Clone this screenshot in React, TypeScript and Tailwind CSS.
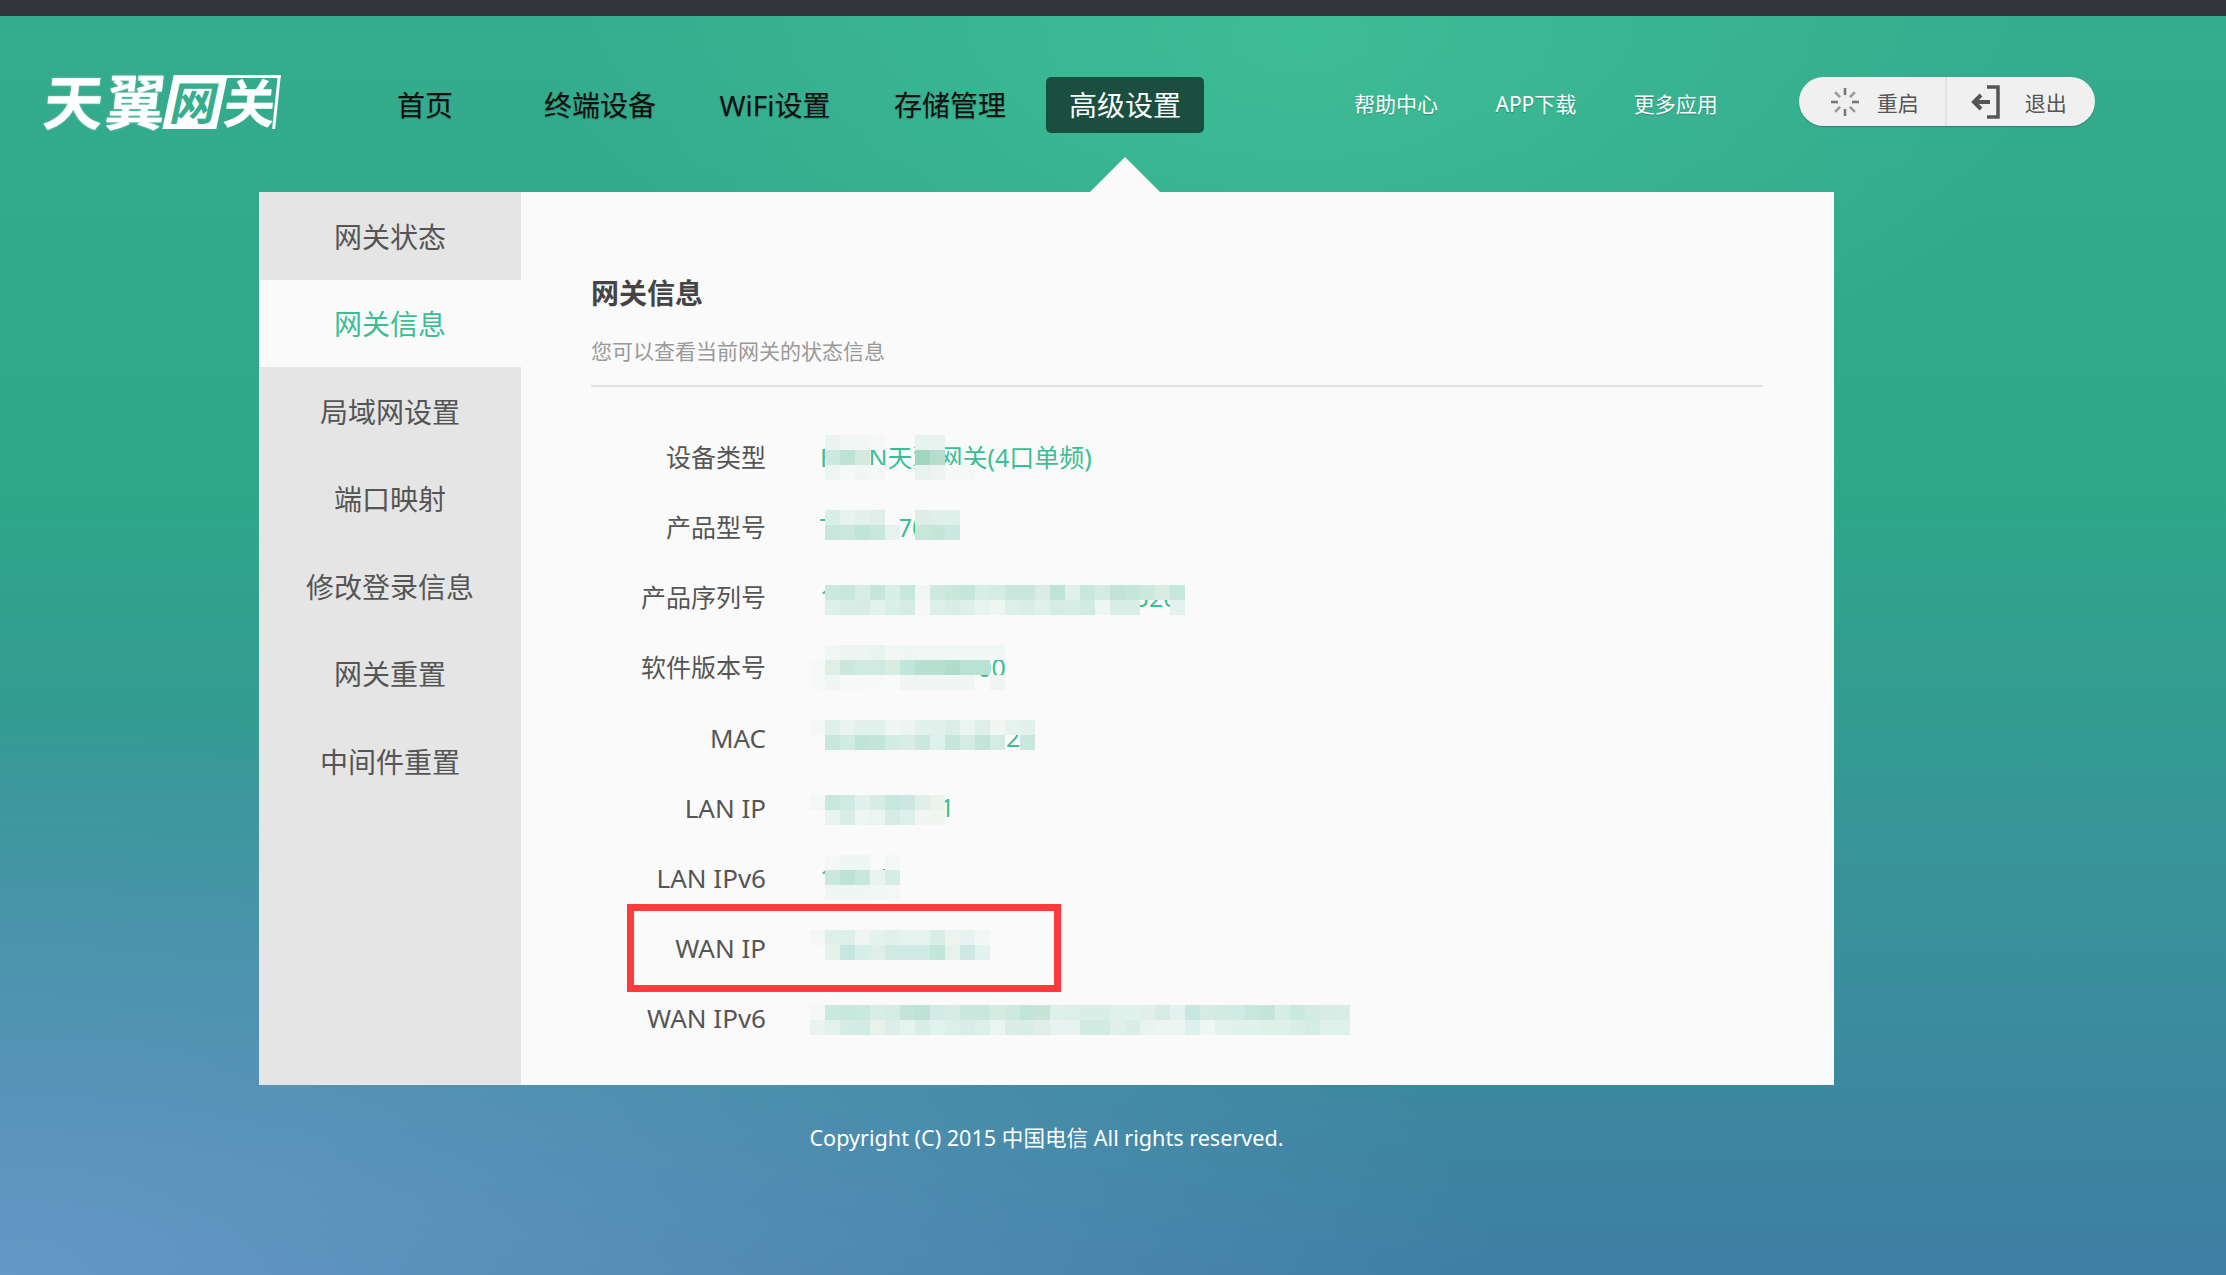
import React from "react";

const navItems = ["首页", "终端设备", "WiFi设置", "存储管理", "高级设置"];
const topLinks = ["帮助中心", "APP下载", "更多应用"];
const sideItems = ["网关状态", "网关信息", "局域网设置", "端口映射", "修改登录信息", "网关重置", "中间件重置"];

// each tile is 15x15, "" leaves the text below visible
const rows: { label: string; value: string; top: number; tiles: string[][] }[] = [
  {
    label: "设备类型",
    value: "EPON天翼网关(4口单频)",
    top: 12,
    tiles: [
      ["", "e9f4f1", "f1f7f5", "f2f7f5", "f4f8f7", "", "", "e6f3ef", "e8f3ef"],
      ["", "cfe8df", "bde3d6", "d5e9df", "", "", "", "a0d6c2", "b5ddce"],
      ["", "eef6f4", "f5f9f8", "eff6f4", "f3f8f7", "", "", "e8f3ef", "ebf4f1", "f5f8f7", "f5f8f7"],
    ],
  },
  {
    label: "产品型号",
    value: "T0000.700",
    top: 17,
    tiles: [
      ["", "d9eee8", "e6f3ef", "e2f1ec", "deefe9", "fafafa", "", "ddeee8", "dff0ea", "dff0ea"],
      ["", "c7e7dd", "cbe8de", "bfe5d9", "c9e6da", "e4f3ef", "", "c8e6da", "c6e5d9", "cbe9e2"],
    ],
  },
  {
    label: "产品序列号",
    value: "1000000000000000000000320",
    top: 22,
    tiles: [
      ["", "cde8de", "c9e7dc", "d8ede6", "c6e6da", "d8eee9", "c8e7dc", "f3f7f4", "cfe9e0", "c9e8dc", "c5e6da", "d7eee7", "d4ece4", "c9e7dc", "c9e7dc", "d9ede5", "bde4d6", "e0f1ed", "c9e7dc", "d3ebe2", "c2e4d6", "c5e6da", "cde9de", "d8ecdf", "c5e7dc"],
      ["", "def0ea", "d8ede6", "d6ece4", "e2f2ec", "d9efe9", "d4ece4", "f5f8f5", "dcefe8", "d8ede5", "dff0ea", "e8f4f0", "eff6f2", "dcefe9", "d9eee7", "e0f1ea", "d4ece4", "d7eee5", "d0ebe3", "eff6f4", "d9eee6", "d9eee6", "", "", "e3f2ee"],
    ],
  },
  {
    label: "软件版本号",
    value: "1000000000000",
    top: 12,
    tiles: [
      ["", "f1f7f5", "ecf5f2", "ecf5f2", "e9f3f0", "f2f7f5", "eff6f4", "f1f7f5", "f1f7f5", "f1f7f5", "f1f7f5", "f1f7f5", "f1f7f5"],
      ["f5f9f8", "deefe4", "c9e7db", "d0ebe3", "cfeae1", "d8ecdf", "c3e6dc", "b7e0d1", "b7e0d1", "aeddcb", "b9e2d5", "b9e2d5", ""],
      ["f5f9f8", "eff6f4", "f6f9f8", "f6f9f8", "f8faf9", "f9fafa", "f0f6f4", "f0f6f4", "f0f6f4", "f0f6f4", "f0f6f4", "", "eef5f3"],
    ],
  },
  {
    label: "MAC",
    value: "00000000000002",
    top: 17,
    tiles: [
      ["f3f8f6", "dfefea", "e9f3ef", "e2f1ec", "e2f1ec", "eff6f3", "edf5f2", "e3f1ed", "e3f1ed", "dceee8", "eaf4f0", "dcefe8", "f1f6f3", "e6f2ed", "e3f1ed"],
      ["fafafa", "c7e7dd", "d0ebe3", "bfe5d9", "c3e6da", "d2ece5", "daede5", "cae8de", "dff1ed", "c5e7db", "d4ece4", "c3e4d9", "d4ece4", "", "c8e8df"],
    ],
  },
  {
    label: "LAN IP",
    value: "192.168.1.1",
    top: 22,
    tiles: [
      ["f3f8f6", "c5e7dc", "cfeae3", "e2f1ee", "d7ede3", "c8e7dc", "cde6e2", "dff0ea", "ecf3ed"],
      ["fafafa", "e8f4f1", "d7ede6", "eef6f3", "eaf4f1", "d5ece4", "ddf0eb", "eff6f3", "f0f5f0"],
    ],
  },
  {
    label: "LAN IPv6",
    value: "1:11:1",
    top: 12,
    tiles: [
      ["", "f5f8f7", "f0f6f4", "f0f6f4", "", "f3f7f6"],
      ["", "c9e8de", "bde3d5", "c8e7dc", "e9f3ef", "d5ede6"],
      ["", "eff6f4", "eff6f4", "f0f6f4", "f1f7f5", "f3f7f6"],
    ],
  },
  {
    label: "WAN IP",
    value: "",
    top: 17,
    tiles: [
      ["f3f8f6", "dfefe9", "dcefe9", "eef5f3", "e4f2ee", "e2f0ec", "e6f2ee", "e6f2ee", "daeee8", "edf4ef", "e7f3f0", "f2f7f5"],
      ["", "e4f2ea", "c5e7df", "d8eee8", "dfefe8", "cfe9e3", "d0ebe3", "d0ebe3", "c2e6da", "e8f2ec", "cde9e1", "e2f2ee"],
    ],
  },
  {
    label: "WAN IPv6",
    value: "",
    top: 22,
    tiles: [
      ["f3f7f6", "c9e8df", "c5e7dc", "cbe8e0", "d9ede7", "d5ece6", "c3e4d9", "bfe2d6", "d2ebe7", "d6ede6", "c9e7dc", "c8e7dd", "d3ebe0", "cde9e0", "c3e5d9", "c7e4d7", "ddf0ec", "dcefe9", "d9eee7", "d9eee7", "e0f1ec", "e1f1ed", "e0f0e8", "d7ece4", "e3f2ef", "c8e8df", "d4ece4", "d2ebe2", "cdeae3", "c5e7dc", "c3e5da", "d6ece6", "cbe9df", "d3ebe3", "d6ece4", "d8ede7"],
      ["e9f4ef", "e2f2ed", "d4ece5", "d2ebe4", "e6f2ea", "dceee9", "e5f3ef", "daeee9", "e2f3ee", "dcf0ea", "d7eee8", "dcefe9", "eaf5f2", "daede7", "d8ede7", "dfeee6", "e6f3f0", "e6f3f0", "d2ebe2", "d2ebe2", "dff0ea", "d9eee9", "e9f4f0", "edf5f3", "edf5f3", "dcf0ec", "eff6f4", "e4f2ee", "e1f1ec", "e1f1ec", "dff0e9", "dff0e9", "d9eee7", "d4ece6", "e0f1ec", "e0f1ec"],
    ],
  },
];

function Mosaic({ top, tiles }: { top: number; tiles: string[][] }) {
  return (
    <div className="absolute left-[219px] flex flex-col" style={{ top }}>
      {tiles.map((line, i) => (
        <div key={i} className="flex">
          {line.map((c, j) => (
            <span key={j} className="w-[15px] h-[15px]" style={{ backgroundColor: c ? `#${c}` : "transparent" }} />
          ))}
        </div>
      ))}
    </div>
  );
}

function Logo() {
  return (
    <div className="w-[302px] h-[56px] flex items-center pb-[6px] select-none">
      <span className="text-[60px] leading-none font-bold text-white -skew-x-6 tracking-[2px] [text-shadow:0_0_2px_rgba(255,255,255,.5)]">天翼</span>
      <span className="w-[54px] h-[54px] bg-white text-[#37ad8f] text-[46px] leading-[54px] text-center font-bold -skew-x-12">网</span>
      <span className="w-[54px] h-[54px] ml-[2px] border-t-[3px] border-r-[3px] border-white text-white text-[52px] leading-[50px] text-center font-bold -skew-x-6">关</span>
    </div>
  );
}

function RestartIcon() {
  const rays = [0, 45, 90, 135, 180, 225, 270, 315];
  return (
    <svg width="32" height="32" viewBox="0 0 32 32" className="shrink-0">
      {rays.map((r) => (
        <line key={r} x1="16" y1="2" x2="16" y2="9" stroke={r % 90 === 0 ? "#777" : "#999"} strokeWidth="2.6" transform={`rotate(${r} 16 16)`} />
      ))}
    </svg>
  );
}

function ExitIcon() {
  return (
    <svg width="30" height="34" viewBox="0 0 30 34" fill="none" stroke="#555" className="shrink-0">
      <path d="M16 2h11v30H16" strokeWidth="3.5" />
      <path d="M19 17H4M10 10l-7 7 7 7" strokeWidth="4" />
    </svg>
  );
}

export default function App() {
  return (
    <div className="min-h-screen font-['Noto_Sans','Noto_Sans_CJK_SC',sans-serif] bg-[radial-gradient(ellipse_750px_420px_at_1300px_40px,rgba(66,200,155,.6),transparent),radial-gradient(ellipse_1500px_560px_at_0px_1275px,rgba(104,155,200,.92),transparent),linear-gradient(180deg,#36ac8e_0%,#2fa68a_40%,#3a8f9c_75%,#3f7ea4_100%)]">
      <div className="h-[16px] bg-[#35363b]" />

      {/* Header */}
      <header className="h-[176px] flex items-start pt-[61px] pl-[44px]">
        <Logo />
        <nav className="flex gap-[17px]">
          {navItems.map((item, i) => (
            <div
              key={item}
              className={
                i === 4
                  ? "relative w-[158px] h-[56px] rounded-[5px] bg-[#1a4f3f] text-white text-[28px] flex items-center justify-center"
                  : "w-[158px] h-[56px] text-[#111] text-[28px] flex items-center justify-center [text-shadow:0_1px_1px_rgba(0,0,0,.3)]"
              }
            >
              {item}
              {i === 4 && (
                <span className="absolute left-1/2 top-[80px] -translate-x-1/2 w-0 h-0 border-x-[35px] border-x-transparent border-b-[35px] border-b-[#fafafa]" />
              )}
            </div>
          ))}
        </nav>
        <div className="flex gap-[57.5px] ml-[150px] h-[56px] items-center">
          {topLinks.map((l) => (
            <span key={l} className="text-[21px] text-white [text-shadow:0_1px_1px_rgba(0,0,0,.25)]">{l}</span>
          ))}
        </div>
        <div className="flex ml-[81px] w-[296px] h-[49px] rounded-full bg-[#f0f0f0] shadow-[0_1px_1px_rgba(0,0,0,.25)] text-[21px] text-[#555]">
          <div className="w-[148px] flex items-center pl-[30px] gap-[16px] border-r-2 border-[#e2e2e2]">
            <RestartIcon />
            <span className="pt-[4px]">重启</span>
          </div>
          <div className="flex-1 flex items-center pl-[24px] gap-[24px]">
            <ExitIcon />
            <span className="pt-[4px]">退出</span>
          </div>
        </div>
      </header>

      {/* Panel */}
      <div className="ml-[259px] w-[1575px]">
        <main className="flex h-[893px] bg-[#fafafa]">
          <aside className="w-[262px] bg-[#e5e5e5]">
            {sideItems.map((s, i) => (
              <div
                key={s}
                className={
                  "h-[87.5px] flex items-center justify-center pt-[2px] text-[28px] " +
                  (i === 1 ? "bg-[#fafafa] text-[#3abf95]" : "text-[#555]")
                }
              >
                {s}
              </div>
            ))}
          </aside>
          <section className="flex-1 pl-[70px] pr-[71px] pt-[81px]">
            <h2 className="text-[28px] leading-[40px] font-bold text-[#444]">网关信息</h2>
            <p className="mt-[23px] text-[21px] leading-[30px] text-[#999]">您可以查看当前网关的状态信息</p>
            <div className="mt-[19px] border-t-2 border-[#e2e2e2]" />
            <div className="mt-[36px]">
              {rows.map((r) => (
                <div key={r.label} className="relative h-[70px] flex items-center text-[25px]">
                  <span className={"w-[175px] text-right text-[#555] shrink-0 " + (/[A-Z]/.test(r.label) ? "text-[26px]" : "")}>{r.label}</span>
                  <span className="ml-[54px] text-[#3abf95] whitespace-nowrap">{r.value}</span>
                  <Mosaic top={r.top} tiles={r.tiles} />
                  {r.label === "WAN IP" && (
                    <div className="absolute left-[36px] top-[-9px] w-[434px] h-[88px] border-[7px] border-[#ff3b3b]" />
                  )}
                </div>
              ))}
            </div>
          </section>
        </main>
        <footer className="pt-[38px] text-center text-[21.6px] leading-[30px] text-white">
          Copyright (C) 2015 中国电信 All rights reserved.
        </footer>
      </div>
    </div>
  );
}
